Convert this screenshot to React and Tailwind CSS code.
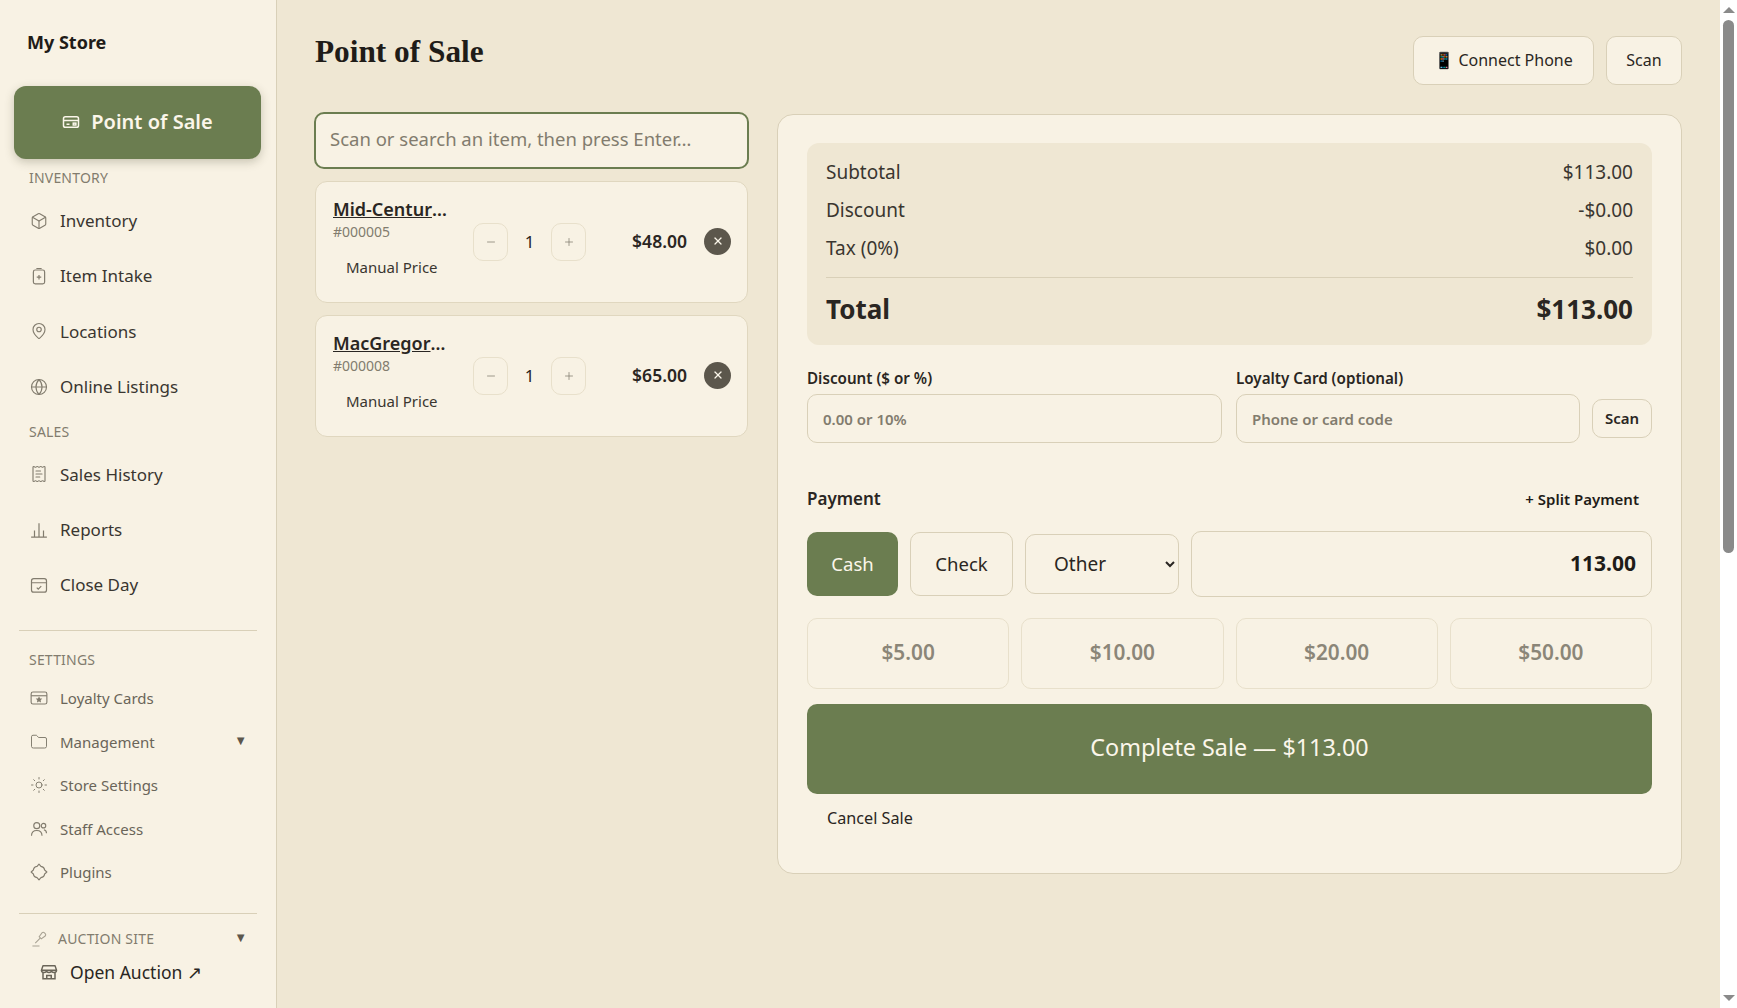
import { MapPin, Globe, ReceiptText, Folder, Sun, Box, X, Minus, Plus } from "lucide-react";

const CardIcon = ({ className }) => (
  <svg viewBox="0 0 24 24" fill="none" stroke="currentColor" strokeWidth="2" className={className}>
    <rect x="2" y="5" width="20" height="14" rx="2.5" />
    <path d="M2 10h20M6 15h4" />
    <rect x="15" y="13.5" width="3.5" height="2.5" />
  </svg>
);

const IntakeIcon = ({ className }) => (
  <svg viewBox="0 0 24 24" fill="none" stroke="currentColor" strokeWidth="1.6" className={className}>
    <rect x="4.500" y="4" width="15" height="18.500" rx="2.500" />
    <path d="M8.500 2h7M12 10.500v6M9 13.500h6" />
  </svg>
);

const BarsIcon = ({ className }) => (
  <svg viewBox="0 0 24 24" fill="none" stroke="currentColor" strokeWidth="1.6" className={className}>
    <path d="M1.500 21.500h21M6 21.500v-9M12 21.500V3M18 21.500v-9" />
  </svg>
);

const CloseDayIcon = ({ className }) => (
  <svg viewBox="0 0 24 24" fill="none" stroke="currentColor" strokeWidth="1.6" className={className}>
    <rect x="2" y="3.500" width="20" height="18" rx="3" />
    <path d="M2 9h20M9 15.500l2 2 4-4" />
  </svg>
);

const LoyaltyIcon = ({ className }) => (
  <svg viewBox="0 0 24 24" fill="none" stroke="currentColor" strokeWidth="1.5" className={className}>
    <rect x="1.500" y="4" width="21" height="16" rx="2.500" />
    <path d="M1.500 9h21" />
    <path d="M12 11.500l.9 1.700 1.800.2-1.300 1.300.3 1.800-1.700-.9-1.700.9.3-1.800-1.300-1.300 1.800-.2z" fill="currentColor" />
  </svg>
);

const StaffIcon = ({ className }) => (
  <svg viewBox="0 0 24 24" fill="none" stroke="currentColor" strokeWidth="1.5" className={className}>
    <circle cx="9" cy="7.500" r="4" />
    <circle cx="18" cy="7.500" r="3" />
    <path d="M2 21c0-4.500 3-7 7-7s7 2.500 7 7M18.500 13c2.200.5 3.500 2 3.500 4.500" />
  </svg>
);

const PluginIcon = ({ className }) => (
  <svg viewBox="0 0 24 24" fill="none" stroke="currentColor" strokeWidth="1.5" className={className}>
    <path d="M12 1.500l2.600 3c2.500.3 4.600 2.400 4.900 4.900l3 2.600-3 2.600c-.3 2.500-2.400 4.600-4.900 4.900l-2.600 3-2.600-3c-2.500-.3-4.600-2.400-4.900-4.900l-3-2.600 3-2.600c.3-2.500 2.400-4.600 4.900-4.900z" strokeLinejoin="round" />
  </svg>
);

const GavelIcon = ({ className }) => (
  <svg viewBox="0 0 24 24" fill="none" stroke="currentColor" strokeWidth="1.5" className={className}>
    <path d="M2 22.500h10M6 18.500l7-7" />
    <path d="M11.500 9.500l4-5.500c1-1 2.500-1 3.500 0l1 1c1 1 1 2.500 0 3.500l-5.500 4z" />
  </svg>
);

const StoreIcon = ({ className }) => (
  <svg viewBox="0 0 24 24" fill="none" stroke="currentColor" strokeWidth="2" className={className}>
    <path d="M4 3.500h16l2 6H2z" strokeLinejoin="round" />
    <path d="M2 9.500c0 2 1.500 3 3.300 3s3.400-1 3.400-3c0 2 1.500 3 3.300 3s3.300-1 3.300-3c0 2 1.600 3 3.400 3s3.300-1 3.300-3" />
    <path d="M4 12.500V21h16v-8.500M9 21v-4.500h6V21" />
  </svg>
);

const mainItems = [
  { label: "Inventory", icon: Box },
  { label: "Item Intake", icon: IntakeIcon },
  { label: "Locations", icon: MapPin },
  { label: "Online Listings", icon: Globe },
];

const salesItems = [
  { label: "Sales History", icon: ReceiptText },
  { label: "Reports", icon: BarsIcon },
  { label: "Close Day", icon: CloseDayIcon },
];

const settingsItems = [
  { label: "Loyalty Cards", icon: LoyaltyIcon },
  { label: "Management", icon: Folder, caret: true },
  { label: "Store Settings", icon: Sun },
  { label: "Staff Access", icon: StaffIcon },
  { label: "Plugins", icon: PluginIcon },
];

const NavLabel = ({ children, className }) => (
  <div className={"h-[18px] pl-[29px] text-[14px] leading-[18px] tracking-[0.2px] text-[#827c6e] uppercase " + className}>
    {children}
  </div>
);

const NavItem = ({ item }) => {
  const Icon = item.icon;
  return (
    <a className="flex h-[55.400px] items-center gap-[12px] pl-[30px] text-[17px] text-[#3a3630]">
      <Icon className="h-[18px] w-[18px] text-[#827c6e]" strokeWidth={1.5} />
      {item.label}
    </a>
  );
};

const SettingsItem = ({ item }) => {
  const Icon = item.icon;
  return (
    <a className="flex h-[43.500px] items-center gap-[12px] pl-[30px] pr-[29px] text-[15px] text-[#6a6559]">
      <Icon className="h-[18px] w-[18px] text-[#827c6e]" strokeWidth={1.3} />
      <span className="flex-1">{item.label}</span>
      {item.caret && <span className="pb-[3px] text-[13px] text-[#5c574c]">▼</span>}
    </a>
  );
};

const Sidebar = () => (
  <aside className="h-full w-[277px] shrink-0 border-r border-[#d9d0b8] bg-[#f8f2e4]">
    <div className="flex h-[86px] items-center pb-[2px] pl-[27px] text-[18px] font-bold text-[#1f1c18]">My Store</div>
    <a className="mr-[15px] ml-[14px] flex h-[73px] items-center justify-center gap-[11px] rounded-[12px] bg-[#6b7d50] pb-[2px] text-[20px] font-semibold text-[#fbf6ea] shadow-[0_3px_10px_rgba(60,60,30,0.25)]">
      <CardIcon className="h-[18px] w-[18px]" />
      Point of Sale
    </a>
    <NavLabel className="mt-[10px] mb-[6px]">Inventory</NavLabel>
    {mainItems.map((item) => (
      <NavItem key={item.label} item={item} />
    ))}
    <NavLabel className="mt-[8px] mb-[6px]">Sales</NavLabel>
    {salesItems.map((item) => (
      <NavItem key={item.label} item={item} />
    ))}
    <div className="mx-[19px] mt-[17px] border-t border-[#d9d0b8]" />
    <NavLabel className="mt-[20px] mb-[8px]">Settings</NavLabel>
    {settingsItems.map((item) => (
      <SettingsItem key={item.label} item={item} />
    ))}
    <div className="mx-[19px] mt-[19px] border-t border-[#d9d0b8]" />
    <div className="mt-[15px] flex h-[18px] items-center gap-[10px] pl-[31px] pr-[29px] text-[14px] text-[#827c6e]">
      <GavelIcon className="h-[17px] w-[17px] text-[#a8a293]" />
      <span className="flex-1 tracking-[0.2px]">AUCTION SITE</span>
      <span className="text-[13px] text-[#5c574c]">▼</span>
    </div>
    <a className="mt-[10px] flex h-[30px] items-center gap-[12px] pl-[40px] text-[17.500px] text-[#2a2622]">
      <StoreIcon className="h-[18px] w-[18px] text-[#6a6559]" />
      Open Auction ↗
    </a>
  </aside>
);

const CartItem = ({ name, sku, price }) => (
  <div className="mx-[1px] flex h-[122px] items-center rounded-[12px] border border-[#e0d7bf] bg-[#f8f2e4] pr-[16px] pl-[17px]">
    <div className="mb-[7px] w-[117px]">
      <div className="truncate text-[18px] leading-[22px] font-semibold text-[#2a2622]">
        <span className="underline">{name}</span>
      </div>
      <div className="mt-[3px] text-[14px] leading-[18px] text-[#827c6e]">{sku}</div>
      <div className="mt-[14px] pl-[13px] text-[15px] leading-[24px] text-[#3a3630]">Manual Price</div>
    </div>
    <div className="ml-[23px] flex items-center">
      <button className="flex h-[38px] w-[35px] items-center justify-center rounded-[10px] border border-[#e8e0cb] text-[#827c6e]">
        <Minus className="h-3 w-3" strokeWidth={1.5} />
      </button>
      <span className="w-[43px] text-center text-[17px] text-[#2a2622]">1</span>
      <button className="flex h-[38px] w-[35px] items-center justify-center rounded-[10px] border border-[#e8e0cb] text-[#827c6e]">
        <Plus className="h-3 w-3" strokeWidth={1.5} />
      </button>
    </div>
    <div className="mb-[1px] flex-1 text-right text-[17.500px] font-semibold text-[#2a2622]">{price}</div>
    <button className="mb-[1px] ml-[17px] flex h-[27px] w-[27px] items-center justify-center rounded-full bg-[#5c574c] text-[#fbf6ea]">
      <X className="h-3 w-3" strokeWidth={2.5} />
    </button>
  </div>
);

const SummaryRow = ({ label, value }) => (
  <div className="flex h-[38.300px] items-center justify-between text-[19px] text-[#3a3630]">
    <span>{label}</span>
    <span>{value}</span>
  </div>
);

const QuickCash = ({ value }) => (
  <button className="h-[71px] flex-1 rounded-[10px] border border-[#e8e0cb] pb-[2px] text-[20.800px] font-semibold text-[#8b8678]">{value}</button>
);

const FakeScrollbar = () => (
  <div className="flex h-full w-[17px] shrink-0 flex-col items-center bg-white">
    <div className="flex h-[20px] items-center">
      <div className="h-0 w-0 border-x-[6px] border-b-[6px] border-x-transparent border-b-[#8a8a8a]" />
    </div>
    <div className="h-[533px] w-[11px] rounded-[6px] bg-[#8a8a8a]" />
    <div className="flex-1" />
    <div className="flex h-[20px] items-center">
      <div className="h-0 w-0 border-x-[6px] border-t-[6px] border-x-transparent border-t-[#8a8a8a]" />
    </div>
  </div>
);

export default function App() {
  return (
    <div className="flex h-screen overflow-hidden bg-[#efe7d3] font-['Noto_Sans',sans-serif] text-[#2a2622]">
      <Sidebar />
      <main className="min-w-0 flex-1 overflow-hidden pr-[38px] pl-[37px] pt-[36px]">
        <div className="flex h-[78px] items-start justify-between">
          <h1 className="pt-[1px] pl-[1px] font-['Liberation_Serif',serif] text-[31.300px] leading-[30px] font-bold text-[#1f1c18]">Point of Sale</h1>
          <div className="flex gap-[12px]">
            <button className="flex h-[49px] w-[181px] items-center justify-center gap-[4px] rounded-[10px] border border-[#d9d0b8] bg-[#f8f2e4] pb-[1px] text-[16px] text-[#2a2622]">
              📱 Connect Phone
            </button>
            <button className="h-[49px] w-[76px] rounded-[10px] border border-[#d9d0b8] bg-[#f8f2e4] pb-[1px] text-[16px] text-[#2a2622]">Scan</button>
          </div>
        </div>
        <div className="grid grid-cols-[435px_1fr] gap-[28px]">
          <div className="-mt-[2px] flex flex-col gap-[12px]">
            <input
              placeholder="Scan or search an item, then press Enter…"
              className="h-[56.500px] w-full rounded-[10px] border-2 border-[#6b7d50] bg-[#f8f2e4] px-[14px] pb-[4px] text-[18.500px] outline-none placeholder:text-[#827c6e]"
            />
            <CartItem name="Mid-Century Lounge Chair" sku="#000005" price="$48.00" />
            <CartItem name="MacGregor Golf Clubs Set" sku="#000008" price="$65.00" />
          </div>
          <div className="h-[760px] rounded-[16px] border border-[#d9d0b8] bg-[#f8f2e4] px-[29px] pt-[28px]">
            <div className="h-[202px] rounded-[12px] bg-[#efe7d3] px-[19px] pt-[10px]">
              <SummaryRow label="Subtotal" value="$113.00" />
              <SummaryRow label="Discount" value="-$0.00" />
              <SummaryRow label="Tax (0%)" value="$0.00" />
              <div className="mt-[9px] flex h-[63px] items-center justify-between border-t border-[#d9d0b8] pt-[1px] text-[26px] font-bold text-[#2a2622]">
                <span>Total</span>
                <span>$113.00</span>
              </div>
            </div>
            <div className="mt-[22px] flex gap-[14px]">
              <label className="w-[415px]">
                <span className="block h-[27px] text-[15.200px] leading-[22px] font-semibold">Discount ($ or %)</span>
                <input
                  placeholder="0.00 or 10%"
                  className="h-[49px] w-full rounded-[10px] border border-[#d9d0b8] px-[15px] text-[15px] font-semibold outline-none placeholder:text-[#827c6e]"
                />
              </label>
              <div className="flex flex-1 items-end gap-[12px]">
                <label className="flex-1">
                  <span className="block h-[27px] text-[15.200px] leading-[22px] font-semibold">Loyalty Card (optional)</span>
                  <input
                    placeholder="Phone or card code"
                    className="h-[49px] w-full rounded-[10px] border border-[#d9d0b8] px-[15px] text-[15px] font-semibold outline-none placeholder:text-[#827c6e]"
                  />
                </label>
                <button className="mb-[5px] h-[39px] w-[60px] rounded-[10px] border border-[#d9d0b8] text-[15px] font-semibold text-[#2a2622]">Scan</button>
              </div>
            </div>
            <div className="mt-[43px] flex h-[26px] items-center justify-between pr-[13px]">
              <span className="text-[17px] font-semibold">Payment</span>
              <span className="text-[15px] font-semibold text-[#1f1c18]">+ Split Payment</span>
            </div>
            <div className="mt-[19px] flex items-center gap-[12px]">
              <button className="h-[64px] w-[91px] rounded-[10px] bg-[#6b7d50] text-[18.500px] text-[#fbf6ea]">Cash</button>
              <button className="h-[64px] w-[103px] rounded-[10px] border border-[#d9d0b8] text-[18.500px] text-[#2a2622]">Check</button>
              <select className="h-[60px] w-[154px] rounded-[10px] border border-[#d9d0b8] px-[24px] text-[19px] text-[#2a2622] outline-none">
                <option>Other</option>
              </select>
              <input
                defaultValue="113.00"
                className="h-[66px] min-w-0 flex-1 rounded-[10px] border border-[#d9d0b8] px-[15px] pb-[2px] text-right text-[21px] font-bold text-[#1f1c18] outline-none"
              />
            </div>
            <div className="mt-[21px] flex gap-[12px]">
              <QuickCash value="$5.00" />
              <QuickCash value="$10.00" />
              <QuickCash value="$20.00" />
              <QuickCash value="$50.00" />
            </div>
            <button className="mt-[15px] h-[90px] w-full rounded-[10px] bg-[#6b7d50] pb-[3px] text-[23.300px] text-[#fbf6ea]">Complete Sale — $113.00</button>
            <button className="mt-[11px] h-[26px] pl-[20px] text-[16.200px] text-[#2a2622]">Cancel Sale</button>
          </div>
        </div>
      </main>
      <FakeScrollbar />
    </div>
  );
}
